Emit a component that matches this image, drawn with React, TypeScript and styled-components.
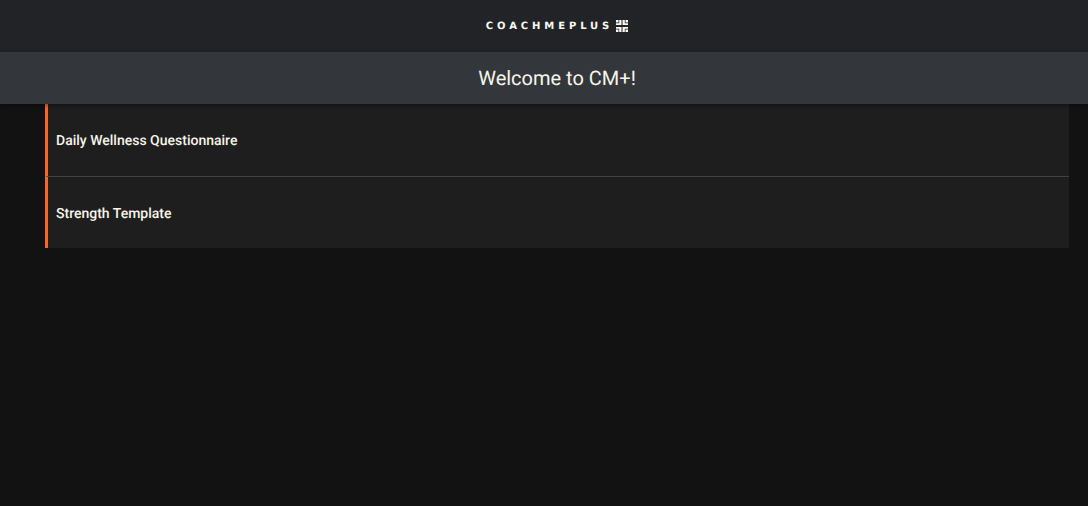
import React from "react";
import styled, { createGlobalStyle } from "styled-components";

const Global = createGlobalStyle`
  html, body { margin: 0; padding: 0; background: #121212; }
  body {
    font-family: Roboto, "Liberation Sans", sans-serif;
    text-rendering: geometricPrecision;
    -webkit-font-smoothing: antialiased;
  }
`;

const Page = styled.div`
  min-height: 506px;
  background: #121212;
  display: flex;
  flex-direction: column;
`;

const TopBar = styled.header`
  height: 52px;
  padding-left: 26px;
  background: #212327;
  display: flex;
  align-items: center;
  justify-content: center;
`;

const Logo = styled.div`
  display: flex;
  align-items: center;
  gap: 3px;
  color: #fbf8f0;
`;

const LogoText = styled.span`
  font-family: "DejaVu Sans", "Liberation Sans", sans-serif;
  font-weight: 700;
  font-size: 10px;
  line-height: 12px;
  letter-spacing: 3.9px;
  padding-top: 1px;
`;

const TitleBar = styled.div`
  height: 52px;
  padding-left: 26px;
  background: #33373c;
  display: flex;
  align-items: center;
  justify-content: center;
  box-shadow: 0 2px 4px rgba(0, 0, 0, 0.35);
  position: relative;
  z-index: 1;
`;

const Title = styled.h1`
  margin: 0;
  font-size: 20px;
  font-weight: 400;
  color: #f8f4e8;
`;

const List = styled.div`
  width: 1024px;
  margin-left: 45px;
  display: flex;
  flex-direction: column;
`;

const Row = styled.div<{ $divided?: boolean }>`
  height: ${(p) => (p.$divided ? 73 : 71)}px;
  box-sizing: border-box;
  background: #1e1e1e;
  border-left: 3px solid #f9662a;
  padding: 2px 0 0 8px;
  display: flex;
  align-items: center;
  border-bottom: ${(p) => (p.$divided ? "1px solid #424242" : "none")};
`;

const RowLabel = styled.span`
  font-size: 14px;
  font-weight: 500;
  color: #f8f4e8;
`;

const LogoMark = () => (
  <svg width="12" height="12" viewBox="0 0 12 12" fill="#fbf8f0" aria-hidden="true">
    <path d="M0 0h2.500v2.500H0zM3.200 0h2.300v5H0V3.200h3.200zM6.500 0h2.300v3.200H12V5H6.500zM9.500 0H12v2.500H9.500zM0 7h5.500v5H3.200V8.800H0zM0 9.500h2.500V12H0zM6.500 7H12v1.800H8.800V12H6.500zM9.500 9.500H12V12H9.500z" />
  </svg>
);

export default function App() {
  return (
    <Page>
      <Global />
      <TopBar>
        <Logo>
          <LogoText>COACHMEPLUS</LogoText>
          <LogoMark />
        </Logo>
      </TopBar>
      <TitleBar>
        <Title>Welcome to CM+!</Title>
      </TitleBar>
      <List>
        <Row $divided>
          <RowLabel>Daily Wellness Questionnaire</RowLabel>
        </Row>
        <Row>
          <RowLabel>Strength Template</RowLabel>
        </Row>
      </List>
    </Page>
  );
}
